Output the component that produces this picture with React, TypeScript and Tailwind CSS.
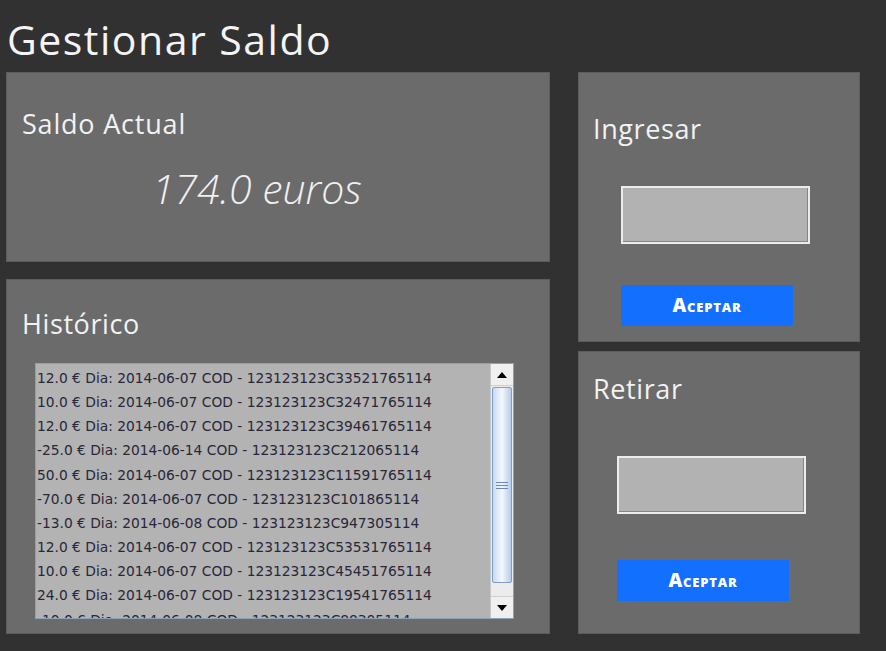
const movimientos = [
  '12.0 € Dia: 2014-06-07 COD - 123123123C33521765114',
  '10.0 € Dia: 2014-06-07 COD - 123123123C32471765114',
  '12.0 € Dia: 2014-06-07 COD - 123123123C39461765114',
  '-25.0 € Dia: 2014-06-14 COD - 123123123C212065114',
  '50.0 € Dia: 2014-06-07 COD - 123123123C11591765114',
  '-70.0 € Dia: 2014-06-07 COD - 123123123C101865114',
  '-13.0 € Dia: 2014-06-08 COD - 123123123C947305114',
  '12.0 € Dia: 2014-06-07 COD - 123123123C53531765114',
  '10.0 € Dia: 2014-06-07 COD - 123123123C45451765114',
  '24.0 € Dia: 2014-06-07 COD - 123123123C19541765114',
  '-10.0 € Dia: 2014-06-08 COD - 123123123C88305114',
];

function Scrollbar() {
  return (
    <div className="flex flex-col shrink-0 w-[23px] bg-[#ececec] border-l border-[#c8c8c8]">
      <div className="h-[22px] flex items-center justify-center bg-[#f0f0f0] border-b border-[#cfcfcf]">
        <div className="w-0 h-0 border-l-[5px] border-r-[5px] border-b-[6px] border-l-transparent border-r-transparent border-b-black" />
      </div>
      <div className="flex-1 flex items-center justify-center mx-[1px] my-[1px] rounded-[2px] border border-[#7f9dc9] bg-gradient-to-r from-[#c9d9f0] via-[#f4f8fd] to-[#b7cbe9]">
        <div className="flex flex-col gap-[2px]">
          <div className="w-[12px] h-[1px] bg-[#6d87b0]" />
          <div className="w-[12px] h-[1px] bg-[#6d87b0]" />
          <div className="w-[12px] h-[1px] bg-[#6d87b0]" />
        </div>
      </div>
      <div className="h-[12px]" />
      <div className="h-[22px] flex items-center justify-center bg-[#f0f0f0] border-t border-[#cfcfcf]">
        <div className="w-0 h-0 border-l-[5px] border-r-[5px] border-t-[6px] border-l-transparent border-r-transparent border-t-black" />
      </div>
    </div>
  );
}

function Operacion({ titulo, alto, arriba, margen, hueco, sangria }: {
  titulo: string;
  alto: string;
  arriba: string;
  margen: string;
  hueco: string;
  sangria: string;
}) {
  return (
    <div className={`${alto} ${arriba} bg-[#6b6b6b] border border-[#5d5d5d] flex flex-col`}>
      <span className="text-[27px] leading-none tracking-[0.6px] text-[#f2f2f2] ml-[14px]">{titulo}</span>
      <div className={`${sangria} ${margen} w-[189px] h-[58px] bg-[#b2b2b2] border-2 border-[#ececec] shadow-[inset_-1px_-1px_0_#7d8794]`} />
      <button className={`${sangria} ${hueco} w-[172px] h-[41px] bg-[#1370ff] text-white font-extrabold text-[19px] [font-variant:small-caps] tracking-[0.8px] leading-none`}>
        Aceptar
      </button>
    </div>
  );
}

export default function App() {
  return (
    <div
      className="w-[886px] h-[651px] bg-[#313131] flex flex-col overflow-hidden"
      style={{ fontFamily: '"Open Sans", "Noto Sans", sans-serif' }}
    >
      <div className="h-[72px] flex items-center pl-[7px] pt-[6px]">
        <span className="text-[41px] leading-none tracking-[1.5px] text-[#f4f4f4]">Gestionar Saldo</span>
      </div>
      <div className="flex gap-[28px] pl-[6px]">
        <div className="w-[544px] flex flex-col gap-[17px]">
          <div className="h-[190px] bg-[#6b6b6b] border border-[#5d5d5d] flex flex-col pt-[37px] pl-[15px]">
            <span className="text-[27px] leading-none tracking-[0.8px] text-[#f2f2f2]">Saldo Actual</span>
            <span className="mt-[31px] ml-[130px] text-[41px] leading-none italic font-light text-[#f0f0f0]">
              174.0 euros
            </span>
          </div>
          <div className="h-[355px] bg-[#6b6b6b] border border-[#5d5d5d] flex flex-col pt-[30px] pl-[15px]">
            <span className="text-[27px] leading-none tracking-[0.6px] text-[#f2f2f2]">Histórico</span>
            <div className="mt-[26px] ml-[13px] w-[479px] h-[256px] bg-[#b3b3b3] border border-[#8ea0b8] flex overflow-hidden">
              <div className="flex-1 flex flex-col pl-[1px] pt-[2px] overflow-hidden">
                {movimientos.map((m, i) => (
                  <div
                    key={i}
                    className="shrink-0 h-[24.2px] flex items-center whitespace-nowrap text-[13.8px] text-[#28273a]"
                    style={{ fontFamily: '"DejaVu Sans", "Noto Sans", sans-serif' }}
                  >
                    {m}
                  </div>
                ))}
              </div>
              <Scrollbar />
            </div>
          </div>
        </div>
        <div className="w-[282px] flex flex-col gap-[9px]">
          <Operacion titulo="Ingresar" alto="h-[270px]" arriba="pt-[42px]" margen="mt-[44px]" hueco="mt-[41px]" sangria="ml-[42px]" />
          <Operacion titulo="Retirar" alto="h-[283px]" arriba="pt-[23px]" margen="mt-[54px]" hueco="mt-[46px]" sangria="ml-[38px]" />
        </div>
      </div>
    </div>
  );
}
